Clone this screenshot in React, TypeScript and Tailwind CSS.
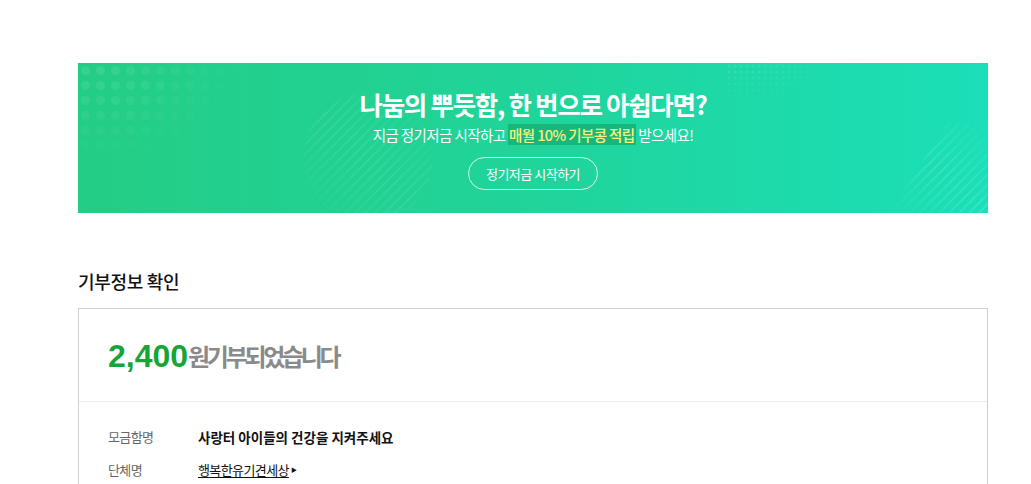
import React from "react"

const KR = "font-['Noto_Sans_CJK_KR','Noto_Sans',sans-serif]"

function BannerDeco() {
  return (
    <svg className="absolute inset-0 h-full w-full pointer-events-none" viewBox="0 0 910 150" preserveAspectRatio="none">
      <defs>
        <pattern id="dots" width="15" height="15" patternUnits="userSpaceOnUse">
          <circle cx="7.5" cy="7.5" r="4.5" fill="#ffffff" />
        </pattern>
        <pattern id="tiny" width="6" height="6" patternUnits="userSpaceOnUse">
          <circle cx="3" cy="3" r="1.6" fill="#ffffff" />
        </pattern>
        <pattern id="stripes" width="7" height="7" patternUnits="userSpaceOnUse" patternTransform="rotate(45)">
          <rect width="2" height="7" fill="#ffffff" />
        </pattern>
        <radialGradient id="fadeDots" cx="0.1" cy="0.1" r="0.9">
          <stop offset="0" stopColor="#fff" stopOpacity="1" />
          <stop offset="1" stopColor="#fff" stopOpacity="0" />
        </radialGradient>
        <mask id="mDots">
          <polygon points="0,0 170,0 80,100 0,100" fill="url(#fadeDots)" />
        </mask>
        <linearGradient id="fadeS" x1="0" y1="1" x2="1" y2="0">
          <stop offset="0" stopColor="#fff" stopOpacity="0" />
          <stop offset="0.5" stopColor="#fff" stopOpacity="1" />
          <stop offset="1" stopColor="#fff" stopOpacity="0" />
        </linearGradient>
        <mask id="mS1">
          <circle cx="290" cy="95" r="65" fill="url(#fadeS)" />
        </mask>
        <mask id="mS2">
          <polygon points="810,150 870,60 910,60 910,150" fill="url(#fadeS)" />
        </mask>
        <mask id="mTiny">
          <rect x="650" y="0" width="110" height="40" fill="url(#fadeDots)" />
        </mask>
      </defs>
      <rect x="0" y="0" width="180" height="110" fill="url(#dots)" mask="url(#mDots)" opacity="0.09" />
      <rect x="220" y="30" width="140" height="120" fill="url(#stripes)" mask="url(#mS1)" opacity="0.08" />
      <rect x="780" y="50" width="130" height="100" fill="url(#stripes)" mask="url(#mS2)" opacity="0.12" />
      <rect x="650" y="0" width="110" height="40" fill="url(#tiny)" mask="url(#mTiny)" opacity="0.1" />
    </svg>
  )
}

export default function App() {
  return (
    <div className={`min-h-screen bg-white ${KR}`}>
      <div className="ml-[78px] w-[910px] pt-[63px]">
        {/* Banner */}
        <div className="relative h-[150px] overflow-hidden bg-[linear-gradient(90deg,#24cd85_0%,#20d49a_50%,#1bdfb8_100%)]">
          <BannerDeco />
          <div className="relative flex flex-col items-center pt-[24px] text-white">
            <h2 className="text-[25.5px] font-bold leading-[34px] tracking-[-1.3px]">
              나눔의 뿌듯함, 한 번으로 아쉽다면?
            </h2>
            <p className="mt-[3px] text-[14.5px] leading-[22px] tracking-[-0.6px]">
              지금 정기저금 시작하고{" "}
              <span className="bg-[#17b77c] px-[1px] font-medium text-[#f7f47b]">매월 10% 기부콩 적립</span>{" "}
              받으세요!
            </p>
            <button className="mt-[11px] h-[33px] w-[130px] rounded-full border border-white/80 text-[13px] tracking-[-0.5px] text-white">
              정기저금 시작하기
            </button>
          </div>
        </div>

        {/* Section title */}
        <h3 className="mt-[56px] text-[18px] font-medium leading-[24px] text-[#111] tracking-[-0.3px]">기부정보 확인</h3>

        {/* Info box */}
        <div className="mt-[15px] border border-[#d0d0d0] border-b-0">
          <div className="flex h-[93px] items-center border-b border-[#ececec] pl-[29px] pt-[2px]">
            <span className="font-['Liberation_Sans',Arial,sans-serif] text-[32px] font-bold text-[#17a538]">2,400</span>
            <span className="text-[24px] font-bold tracking-[-3.3px] text-[#8a8a8a]">원기부되었습니다</span>
          </div>
          <div className="pl-[29px] pt-[18px] text-[13px] leading-[20px]">
            <div className="flex h-[33px] items-center">
              <span className="w-[90px] tracking-[-0.6px] text-[#666]">모금함명</span>
              <span className="text-[13.5px] font-bold tracking-[0px] text-[#111]">사랑터 아이들의 건강을 지켜주세요</span>
            </div>
            <div className="flex h-[33px] items-center">
              <span className="w-[90px] tracking-[-0.6px] text-[#666]">단체명</span>
              <span className="flex items-center text-[#111]">
                <span className="underline underline-offset-2 tracking-[-0.6px]">행복한유기견세상</span>
                <span className="ml-[2px] text-[6px]">▶</span>
              </span>
            </div>
          </div>
        </div>
      </div>
    </div>
  )
}
